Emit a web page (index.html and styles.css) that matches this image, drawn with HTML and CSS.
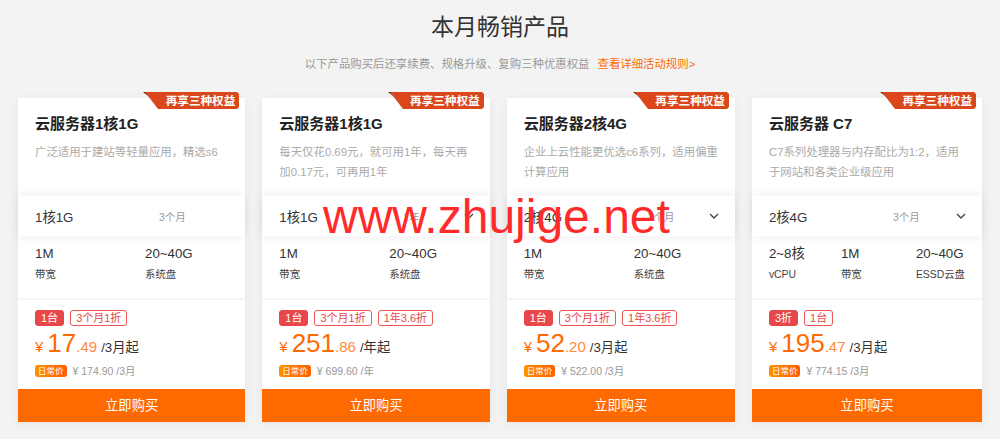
FILE: index.html
```html
<html lang="zh-CN">

<head>
	<title>本月畅销产品</title>
	<meta charset="utf-8">
	<meta name="viewport" content="width=device-width, initial-scale=1.0">
	<link rel="stylesheet" href="styles.css">
</head>

<body>
	<div class="page">
		<h2 class="title">本月畅销产品</h2>
		<p class="sub">以下产品购买后还享续费、规格升级、复购三种优惠权益<a href="#">查看详细活动规则&gt;</a></p>

		<div class="cards">
			<div class="card">
				<div class="badge">
					<svg width="96" height="17" viewBox="0 0 96 17"><polygon points="0,0 8,0 8,6" fill="#5a1a08"/><polygon points="2,0 94,0 96,2 96,15 94,17 15,17" fill="#d9471b"/></svg>
					<span>再享三种权益</span>
				</div>
				<div class="card-top">
					<h3>云服务器1核1G</h3>
					<p>广泛适用于建站等轻量应用，精选s6</p>
				</div>
				<div class="select">
					<span class="sel-name">1核1G</span>
					<span class="sel-period">3个月</span>
				</div>
				<div class="specs">
					<div class="spec"><b>1M</b><span>带宽</span></div>
					<div class="spec"><b>20~40G</b><span>系统盘</span></div>
				</div>
				<div class="pricing">
					<div class="tags"><span class="tag solid">1台</span><span class="tag">3个月1折</span></div>
					<div class="price"><span class="cur">¥</span><span class="int">17</span><span class="dec">.49</span><span class="unit">/3月起</span></div>
					<div class="orig"><span class="orig-tag">日常价</span>¥ 174.90 /3月</div>
				</div>
				<a class="buy" href="#">立即购买</a>
			</div>

			<div class="card">
				<div class="badge">
					<svg width="96" height="17" viewBox="0 0 96 17"><polygon points="0,0 8,0 8,6" fill="#5a1a08"/><polygon points="2,0 94,0 96,2 96,15 94,17 15,17" fill="#d9471b"/></svg>
					<span>再享三种权益</span>
				</div>
				<div class="card-top">
					<h3>云服务器1核1G</h3>
					<p>每天仅花0.69元，就可用1年，每天再<br>加0.17元，可再用1年</p>
				</div>
				<div class="select">
					<span class="sel-name">1核1G</span>
					<span class="sel-period">1年</span>
					<svg class="chev" width="10" height="6" viewBox="0 0 10 6"><polyline points="1,1 5,5 9,1" fill="none" stroke="#444" stroke-width="1.4"/></svg>
				</div>
				<div class="specs">
					<div class="spec"><b>1M</b><span>带宽</span></div>
					<div class="spec"><b>20~40G</b><span>系统盘</span></div>
				</div>
				<div class="pricing">
					<div class="tags"><span class="tag solid">1台</span><span class="tag">3个月1折</span><span class="tag">1年3.6折</span></div>
					<div class="price"><span class="cur">¥</span><span class="int">251</span><span class="dec">.86</span><span class="unit">/年起</span></div>
					<div class="orig"><span class="orig-tag">日常价</span>¥ 699.60 /年</div>
				</div>
				<a class="buy" href="#">立即购买</a>
			</div>

			<div class="card">
				<div class="badge">
					<svg width="96" height="17" viewBox="0 0 96 17"><polygon points="0,0 8,0 8,6" fill="#5a1a08"/><polygon points="2,0 94,0 96,2 96,15 94,17 15,17" fill="#d9471b"/></svg>
					<span>再享三种权益</span>
				</div>
				<div class="card-top">
					<h3>云服务器2核4G</h3>
					<p>企业上云性能更优选c6系列，适用偏重<br>计算应用</p>
				</div>
				<div class="select">
					<span class="sel-name">2核4G</span>
					<span class="sel-period">3个月</span>
					<svg class="chev" width="10" height="6" viewBox="0 0 10 6"><polyline points="1,1 5,5 9,1" fill="none" stroke="#444" stroke-width="1.4"/></svg>
				</div>
				<div class="specs">
					<div class="spec"><b>1M</b><span>带宽</span></div>
					<div class="spec"><b>20~40G</b><span>系统盘</span></div>
				</div>
				<div class="pricing">
					<div class="tags"><span class="tag solid">1台</span><span class="tag">3个月1折</span><span class="tag">1年3.6折</span></div>
					<div class="price"><span class="cur">¥</span><span class="int">52</span><span class="dec">.20</span><span class="unit">/3月起</span></div>
					<div class="orig"><span class="orig-tag">日常价</span>¥ 522.00 /3月</div>
				</div>
				<a class="buy" href="#">立即购买</a>
			</div>

			<div class="card">
				<div class="badge">
					<svg width="96" height="17" viewBox="0 0 96 17"><polygon points="0,0 8,0 8,6" fill="#5a1a08"/><polygon points="2,0 94,0 96,2 96,15 94,17 15,17" fill="#d9471b"/></svg>
					<span>再享三种权益</span>
				</div>
				<div class="card-top">
					<h3>云服务器 C7</h3>
					<p>C7系列处理器与内存配比为1:2，适用<br>于网站和各类企业级应用</p>
				</div>
				<div class="select">
					<span class="sel-name">2核4G</span>
					<span class="sel-period">3个月</span>
					<svg class="chev" width="10" height="6" viewBox="0 0 10 6"><polyline points="1,1 5,5 9,1" fill="none" stroke="#444" stroke-width="1.4"/></svg>
				</div>
				<div class="specs three">
					<div class="spec"><b>2~8核</b><span>vCPU</span></div>
					<div class="spec"><b>1M</b><span>带宽</span></div>
					<div class="spec"><b>20~40G</b><span>ESSD云盘</span></div>
				</div>
				<div class="pricing">
					<div class="tags"><span class="tag solid">3折</span><span class="tag">1台</span></div>
					<div class="price"><span class="cur">¥</span><span class="int">195</span><span class="dec">.47</span><span class="unit">/3月起</span></div>
					<div class="orig"><span class="orig-tag">日常价</span>¥ 774.15 /3月</div>
				</div>
				<a class="buy" href="#">立即购买</a>
			</div>
		</div>

		<div class="watermark">www.zhujige.net</div>
	</div>
</body>
</html>
```

FILE: styles.css
```css
html, body {
	margin: 0;
	padding: 0;
	background: #f3f3f3;
	font-family: "Liberation Sans", "Noto Sans CJK SC", sans-serif;
	color: #333;
}

*, *:before, *:after {
	box-sizing: border-box;
}

.page {
	position: relative;
	height: 439px;
	padding-top: 12px;
}

.title {
	margin: 0;
	font-size: 23px;
	line-height: 30px;
	font-weight: normal;
	text-align: center;
	color: #333;
}

.sub {
	margin: 14px 0 0 0;
	font-size: 11.4px;
	line-height: 16px;
	text-align: center;
	color: #999;
}

.sub a {
	margin-left: 8px;
	color: #ff6a00;
	text-decoration: none;
}

.cards {
	display: grid;
	grid-template-columns: repeat(4, 1fr);
	gap: 17px;
	padding: 0 18px;
	margin-top: 26px;
}

.card {
	position: relative;
	display: flex;
	flex-direction: column;
	height: 324px;
	background: #fff;
	box-shadow: 0 2px 10px rgba(0, 0, 0, 0.06);
}

.badge {
	position: absolute;
	top: -6px;
	right: 6px;
	width: 96px;
	height: 17px;
	text-align: right;
	padding-right: 4px;
}

.badge svg {
	position: absolute;
	top: 0;
	left: 0;
}

.badge span {
	position: relative;
	color: #fff;
	font-size: 11.6px;
	line-height: 17px;
	font-weight: bold;
}

.card-top {
	height: 98px;
	padding: 15px 17px 0 17px;
}

.card-top h3 {
	margin: 0;
	font-size: 15px;
	line-height: 22px;
	font-weight: bold;
	color: #222;
}

.card-top p {
	margin: 7px 0 0 0;
	font-size: 11.4px;
	line-height: 20px;
	color: #aaa;
	white-space: nowrap;
}

.select {
	display: flex;
	align-items: center;
	height: 40px;
	padding: 0 16px 0 17px;
	background: #fff;
	box-shadow: 0 0 10px rgba(0, 0, 0, 0.08);
	position: relative;
}

.sel-name {
	width: 124px;
	font-size: 13.3px;
	color: #333;
}

.sel-period {
	flex-grow: 1;
	font-size: 10.5px;
	color: #999;
}

.specs {
	display: grid;
	grid-template-columns: 110px auto;
	height: 64px;
	padding: 8px 17px 0 17px;
	border-bottom: 2px solid #f5f5f5;
}

.specs.three {
	grid-template-columns: 72px 75px auto;
}

.spec b {
	display: block;
	font-weight: normal;
	font-size: 13.3px;
	line-height: 20px;
	color: #333;
}

.spec span {
	display: block;
	margin-top: 2px;
	font-size: 10.4px;
	line-height: 18px;
	color: #444;
	white-space: nowrap;
}

.pricing {
	flex-grow: 1;
	padding: 10px 17px 0 17px;
}

.tags {
	display: flex;
	gap: 6px;
}

.tag {
	height: 16px;
	padding: 0 5px;
	border: 1px solid #ee5656;
	border-radius: 3px;
	font-size: 11px;
	line-height: 14px;
	color: #e8474a;
}

.tag.solid {
	background: #e8474a;
	border-color: #e8474a;
	color: #fff;
}

.price {
	margin-top: 2px;
	height: 30px;
	display: flex;
	align-items: baseline;
	color: #ff6a00;
}

.price .cur {
	font-size: 15px;
	margin-right: 4px;
}

.price .int {
	font-size: 26px;
	line-height: 30px;
}

.price .dec {
	font-size: 15px;
	color: #ff8a3d;
	margin-right: 4px;
}

.price .unit {
	font-size: 13.3px;
	color: #333;
}

.orig {
	display: flex;
	align-items: center;
	margin-top: 5px;
	font-size: 10.5px;
	color: #999;
}

.orig-tag {
	height: 12px;
	padding: 0 3px;
	margin-right: 6px;
	border-radius: 3px;
	background: linear-gradient(90deg, #ff9000, #ff5e00);
	font-size: 8.5px;
	line-height: 12px;
	color: #fff;
}

.buy {
	display: block;
	height: 33px;
	line-height: 33px;
	background: #ff6a00;
	color: #fff;
	font-size: 13.3px;
	text-align: center;
	text-decoration: none;
}

.watermark {
	position: absolute;
	left: 323px;
	top: 193px;
	font-family: "Liberation Sans", sans-serif;
	font-size: 48px;
	line-height: 48px;
	color: #ff2b2b;
}
```
